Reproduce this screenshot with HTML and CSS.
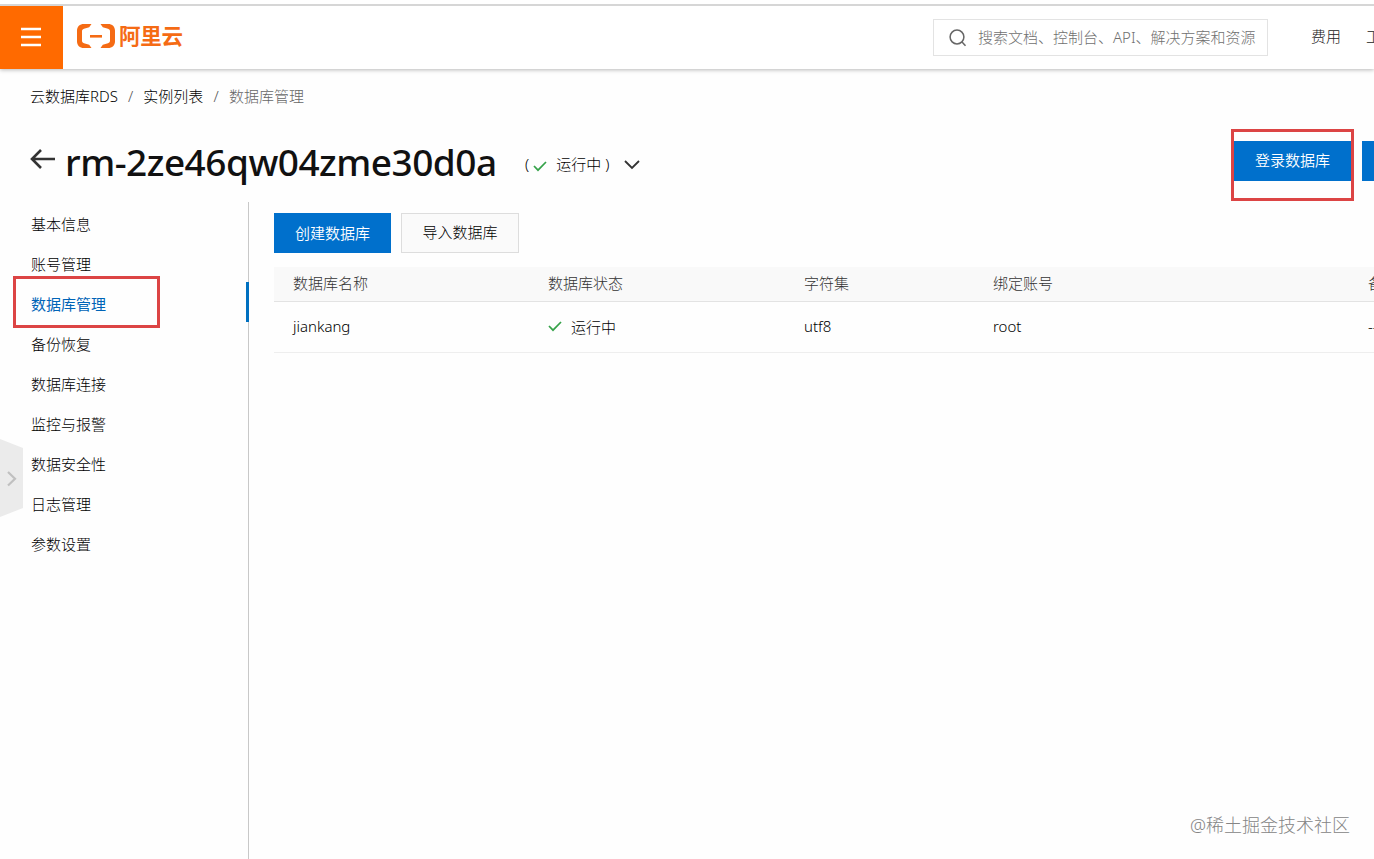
FILE: index.html
```
<!DOCTYPE html>
<html lang="zh-CN">
<head>
<meta charset="utf-8">
<title>数据库管理</title>
<link rel="stylesheet" href="styles.css">
</head>
<body>
<header class="topbar">
  <button class="menu-btn" aria-label="菜单"><svg width="20" height="20" viewBox="0 0 20 20"><path d="M0 2h20M0 10h20M0 18h20" stroke="#fff" stroke-width="2.6"/></svg></button>
  <div class="logo">
    <svg width="38" height="24" viewBox="0 0 38 24" fill="#f56b14"><path d="M14.500 0H7C2.700 0 0 2.700 0 6.500v11C0 21.300 2.700 24 7 24h7.500l-2.300-3.200-5.200-1.600c-1.400-.4-2-1.200-2-2.400V7.200c0-1.200.6-2 2-2.400l5.200-1.600z"/><path d="M23.500 0H31C35.300 0 38 2.700 38 6.500v11c0 3.800-2.700 6.500-7 6.500h-7.500l2.300-3.200 5.200-1.600c1.400-.4 2-1.200 2-2.400V7.200c0-1.200-.6-2-2-2.400l-5.200-1.600z"/><path d="M13 11h12v2.600H13z"/></svg>
    <span class="logo-name">阿里云</span>
  </div>
  <div class="search">
    <svg width="18" height="18" viewBox="0 0 18 18" fill="none" stroke="#666" stroke-width="1.500"><circle cx="8" cy="8" r="6.900"/><path d="M13 13l3.500 3.800"/></svg>
    <span>搜索文档、控制台、API、解决方案和资源</span>
  </div>
  <nav class="top-links"><span>费用</span><span>工单</span></nav>
</header>
<nav class="crumbs"><span>云数据库RDS</span><i>/</i><span>实例列表</span><i>/</i><span class="current">数据库管理</span></nav>
<section class="title-row">
  <svg class="back" width="26" height="22" viewBox="0 0 26 22" fill="none" stroke="#333" stroke-width="2.600"><path d="M25 11H2M11 2L2 11l9 9"/></svg>
  <h1>rm-2ze46qw04zme30d0a</h1>
  <div class="state"><span>(</span><svg class="ok" width="14" height="12" viewBox="0 0 14 12"><path d="M1 6l4 4.200L13 2"/></svg><span class="state-text">运行中</span><span>)</span></div>
  <svg class="chevron" width="16" height="10" viewBox="0 0 16 10" fill="none" stroke="#333" stroke-width="1.800"><path d="M1 1l7 7 7-7"/></svg>
  <div class="actions"><button class="btn primary login">登录数据库</button><button class="btn primary more" aria-label="更多"></button></div>
</section>
<div class="body">
  <aside class="side">
    <a>基本信息</a><a>账号管理</a><a class="active">数据库管理</a><a>备份恢复</a><a>数据库连接</a><a>监控与报警</a><a>数据安全性</a><a>日志管理</a><a>参数设置</a>
  </aside>
  <main class="main">
    <div class="tools"><button class="btn primary">创建数据库</button><button class="btn plain">导入数据库</button></div>
    <div class="row head"><span>数据库名称</span><span>数据库状态</span><span>字符集</span><span>绑定账号</span><span>备注</span></div>
    <div class="row"><span>jiankang</span><span class="run"><svg class="ok" width="14" height="12" viewBox="0 0 14 12"><path d="M1 6l4 4.200L13 2"/></svg>运行中</span><span>utf8</span><span>root</span><span>--</span></div>
  </main>
</div>
<svg class="drawer" width="23" height="78" viewBox="0 0 23 78"><path d="M0 0l23 9v60L0 78z" fill="#ebebeb"/><path d="M8 33l7 6.800L8 46.500" fill="none" stroke="#c0c0c0" stroke-width="2.200"/></svg>
<div class="watermark">@稀土掘金技术社区</div>
</body>
</html>
```
FILE: styles.css
```
*, *::after { box-sizing: border-box; }
body {
  margin: 0;
  height: 859px;
  overflow: hidden;
  position: relative;
  display: flex;
  flex-direction: column;
  background: #fefefe;
  color: #000;
  font: 300 15px/20px "Noto Sans", "Noto Sans CJK SC", sans-serif;
}
button { font: inherit; border: 0; padding: 0; }
svg { flex: none; display: block; }
.topbar {
  flex: none;
  display: flex;
  align-items: center;
  height: 69px;
  padding-top: 6px;
  background: linear-gradient(#fff 4px, #d6d6d6 4px, #d6d6d6 6px, #fff 6px);
  box-shadow: 0 1px 4px rgba(0, 0, 0, .28);
  white-space: nowrap;
}
.menu-btn {
  width: 63px;
  height: 63px;
  display: flex;
  align-items: center;
  justify-content: center;
  background: #ff6a00;
  padding: 0 1px 2px 0;
}
.logo { display: flex; align-items: center; gap: 4px; margin: 0 0 3px 14px; color: #f56b14; }
.logo-name { font-size: 21.500px; font-weight: 700; line-height: 24px; letter-spacing: -.3px; }
.search {
  display: flex;
  align-items: center;
  gap: 11px;
  width: 335px;
  height: 37px;
  margin-left: auto;
  padding-left: 15px;
  border: 1px solid #e3e3e3;
  color: #707070;
}
.search span { padding-bottom: 2px; }
.top-links { flex: none; width: 106px; display: flex; gap: 25px; padding: 0 0 3px 43px; overflow: hidden; color: #222; }
.top-links span { flex: none; }
.crumbs { flex: none; display: flex; padding: 17px 0 0 30px; height: 60px; }
.crumbs i { width: 25.500px; text-align: center; font-style: normal; color: #555; }
.crumbs .current { color: #666; }
.title-row { flex: none; display: flex; align-items: center; height: 72px; padding-left: 30px; overflow: hidden; }
.back { margin-bottom: 13px; }
h1 { flex: none; width: 430px; margin: 0 0 7px 9px; font-size: 37px; line-height: 50px; font-weight: 500; letter-spacing: -.5px; color: #111; white-space: nowrap; }
.state { display: flex; align-items: center; margin: 0 0 2px 30px; }
.state-text { margin: 0 4px 0 9px; }
.state .ok { margin: 4px 0 0 4px; }
.ok { fill: none; stroke: #35a249; stroke-width: 1.700; }
.chevron { margin-left: 15px; }
.actions { flex: none; display: flex; align-items: center; align-self: stretch; width: 143px; margin-left: auto; gap: 8px; }
.btn { flex: none; height: 40px; width: 117px; color: #fff; font-weight: 350; }
.primary { background: #0070cc; }
.login { height: 72px; width: 123px; border: 3px solid #dc4444; background: linear-gradient(#fefefe 9px, #0070cc 9px, #0070cc 49px, #fefefe 49px); padding-bottom: 10px; }
.more { width: 40px; margin-bottom: 8px; }
.body { flex: 1; display: flex; min-height: 0; }
.side { flex: none; width: 249px; margin-top: 1px; padding-top: 3px; border-right: 1px solid #c8c8c8; }
.side a { display: block; height: 40px; line-height: 38px; padding-left: 31px; }
.side .active { position: relative; color: #0064b7; font-weight: 400; border-right: 3px solid #0070c0; margin-right: -1px; top: -3px; line-height: 44px; }
.side .active::after { content: ""; position: absolute; left: 13px; top: -6px; width: 147px; height: 52px; border: 3px solid #dc4444; }
.main { flex: 1; min-width: 0; padding: 12px 0 0 25px; overflow: hidden; }
.tools { display: flex; gap: 10px; margin-bottom: 14px; }
.plain { width: 118px; padding-bottom: 2px; font-weight: 300; color: #000; background: #fafafa; border: 1px solid #ddd; }
.row { display: grid; grid-template-columns: 255px 256px 189px 375px 60px; align-items: center; height: 51px; padding-left: 19px; border-bottom: 1px solid #eee; }
.row > span { padding-bottom: 2px; }
.head { height: 35px; background: #f9f9f9; color: #333; border-color: #e3e3e3; }
.row > .run { display: flex; align-items: center; gap: 9px; padding-bottom: 0; }
.run .ok { margin-bottom: 2px; }
.drawer { position: absolute; left: 0; top: 439px; }
.watermark { position: absolute; left: 1190px; top: 813px; font-size: 18px; line-height: 24px; color: #858585; white-space: nowrap; }
```
